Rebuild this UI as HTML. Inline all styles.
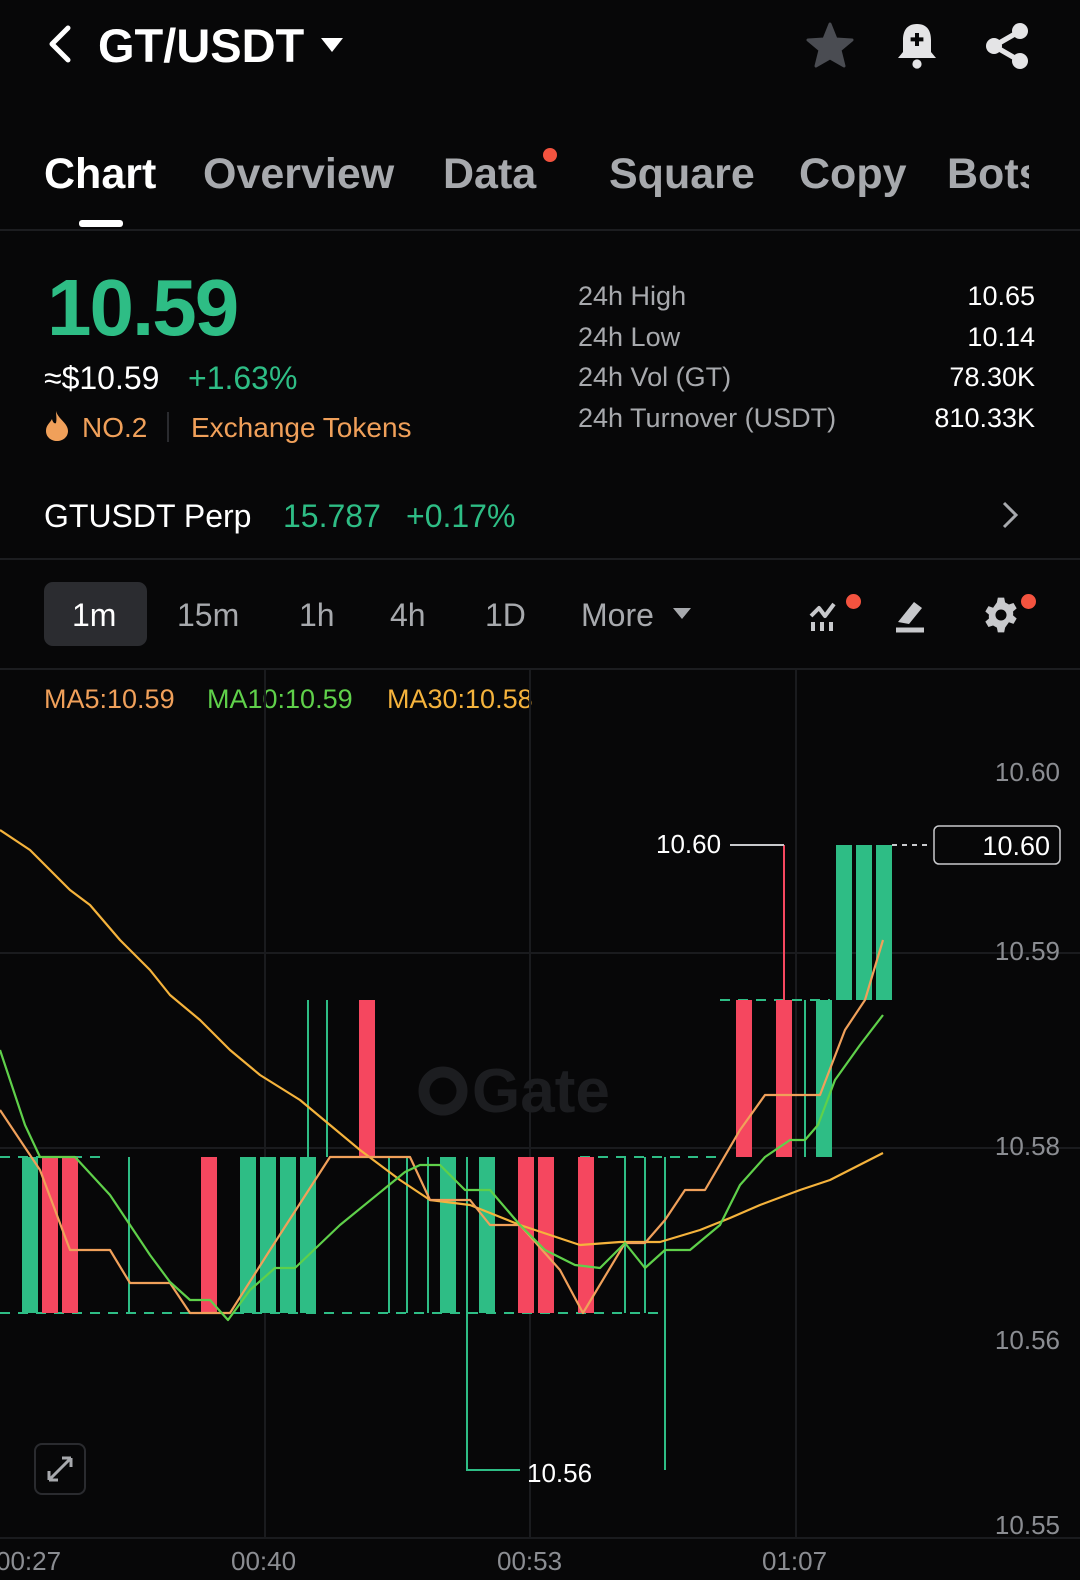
<!DOCTYPE html>
<html><head><meta charset="utf-8"><style>
*{margin:0;padding:0;box-sizing:border-box}
body{width:1080px;height:1580px;background:#070708;font-family:"Liberation Sans",sans-serif;color:#fff;position:relative;overflow:hidden}
.a{position:absolute;white-space:nowrap}
.g{color:#2ebd85}.gr{color:#8b8d92}
</style></head><body>
<svg class="a" style="left:44px;top:24px" width="30" height="40" viewBox="0 0 30 40"><path d="M24 4 L8 20 L24 36" stroke="#fff" stroke-width="5" fill="none" stroke-linecap="round" stroke-linejoin="round"/></svg>
<div class="a" style="left:98px;top:18px;font-size:47px;font-weight:bold">GT/USDT</div>
<svg class="a" style="left:320px;top:36px" width="24" height="18"><path d="M1 2 H23 L12 16Z" fill="#fff"/></svg>
<svg class="a" style="left:806px;top:22px" width="48" height="46" viewBox="0 0 24 23"><path d="M12 1 L15 8.5 L23 9 L17 14 L19 22 L12 18 L5 22 L7 14 L1 9 L9 8.5Z" fill="#4a4c52" stroke="#4a4c52" stroke-linejoin="round" stroke-width="1.5"/></svg>
<svg class="a" style="left:896px;top:22px" width="42" height="48" viewBox="0 0 21 24"><path d="M10.5 1 C5 1 3.5 5 3.5 9 V15 L1 18 H20 L17.5 15 V9 C17.5 5 16 1 10.5 1Z" fill="#e4e4e6"/><circle cx="10.5" cy="21" r="2.3" fill="#e4e4e6"/><path d="M10.5 5.5V12M7.3 8.7H13.7" stroke="#070708" stroke-width="2"/></svg>
<svg class="a" style="left:984px;top:22px" width="46" height="48" viewBox="0 0 23 24"><circle cx="18" cy="4.5" r="4" fill="#e4e4e6"/><circle cx="18" cy="19.5" r="4" fill="#e4e4e6"/><circle cx="5" cy="12" r="4" fill="#e4e4e6"/><path d="M18 4.5L5 12L18 19.5" stroke="#e4e4e6" stroke-width="2.6" fill="none"/></svg>

<div class="a" style="left:44px;top:150px;font-size:43px;font-weight:bold">Chart</div>
<div class="a" style="left:203px;top:150px;font-size:43px;font-weight:bold;color:#a7a9ad">Overview</div>
<div class="a" style="left:443px;top:150px;font-size:43px;font-weight:bold;color:#a7a9ad">Data</div>
<div class="a" style="left:543px;top:148px;width:14px;height:14px;border-radius:50%;background:#f3533f"></div>
<div class="a" style="left:609px;top:150px;font-size:43px;font-weight:bold;color:#a7a9ad">Square</div>
<div class="a" style="left:799px;top:150px;font-size:43px;font-weight:bold;color:#a7a9ad">Copy</div>
<div class="a" style="left:947px;top:150px;width:82px;overflow:hidden;font-size:43px;font-weight:bold;color:#a7a9ad">Bots</div>
<div class="a" style="left:79px;top:220px;width:44px;height:7px;border-radius:3px;background:#fff"></div>
<div class="a" style="left:0;top:229px;width:1080px;height:2px;background:#1c1d20"></div>

<div class="a g" style="left:47px;top:262px;font-size:80px;font-weight:bold;letter-spacing:-2px">10.59</div>
<div class="a" style="left:44px;top:360px;font-size:32px">≈$10.59</div>
<div class="a g" style="left:188px;top:360px;font-size:32px">+1.63%</div>
<svg class="a" style="left:44px;top:411px" width="26" height="30" viewBox="0 0 13 15"><path d="M6 0 C7 4 12 6 12 10 C12 13 9.5 15 6.5 15 C3.5 15 1 13 1 10 C1 7 3 6 4 4 C4.5 6 5.5 6.5 6 6 C6.5 4 6 2 6 0Z" fill="#f0a05a"/></svg>
<div class="a" style="left:82px;top:412px;font-size:28px;color:#f0a05a">NO.2</div>
<div class="a" style="left:167px;top:412px;width:2px;height:30px;background:#2a2b2f"></div>
<div class="a" style="left:191px;top:412px;font-size:28px;color:#f0a05a">Exchange Tokens</div>

<div class="a" style="left:578px;top:276px;font-size:27px;color:#a7a9ad;line-height:40.7px">24h High<br>24h Low<br>24h Vol (GT)<br>24h Turnover (USDT)</div>
<div class="a" style="right:45px;top:276px;font-size:27px;line-height:40.7px;text-align:right">10.65<br>10.14<br>78.30K<br>810.33K</div>

<div class="a" style="left:44px;top:498px;font-size:32px">GTUSDT Perp</div>
<div class="a g" style="left:283px;top:498px;font-size:32px">15.787</div>
<div class="a g" style="left:406px;top:498px;font-size:32px">+0.17%</div>
<svg class="a" style="left:1000px;top:500px" width="20" height="30"><path d="M4 3 L16 15 L4 27" stroke="#a7a9ad" stroke-width="3" fill="none"/></svg>
<div class="a" style="left:0;top:558px;width:1080px;height:2px;background:#1c1d20"></div>

<div class="a" style="left:44px;top:582px;width:103px;height:64px;border-radius:9px;background:#2b2c30"></div>
<div class="a" style="left:72px;top:597px;font-size:32px">1m</div>
<div class="a" style="left:177px;top:597px;font-size:32px;color:#a7a9ad">15m</div>
<div class="a" style="left:299px;top:597px;font-size:32px;color:#a7a9ad">1h</div>
<div class="a" style="left:390px;top:597px;font-size:32px;color:#a7a9ad">4h</div>
<div class="a" style="left:485px;top:597px;font-size:32px;color:#a7a9ad">1D</div>
<div class="a" style="left:581px;top:597px;font-size:32px;color:#a7a9ad">More</div>
<svg class="a" style="left:672px;top:607px" width="20" height="14"><path d="M1 1H19L10 12Z" fill="#a7a9ad"/></svg>
<svg class="a" style="left:808px;top:598px" width="40" height="34"><path d="M3 18 L11 10 L17 18 L26 6" stroke="#c8c9cc" stroke-width="4" fill="none" stroke-linejoin="round"/><path d="M5 24V33M14 24V33M23 24V33" stroke="#c8c9cc" stroke-width="4"/></svg>
<div class="a" style="left:846px;top:594px;width:15px;height:15px;border-radius:50%;background:#f3533f"></div>
<svg class="a" style="left:894px;top:598px" width="38" height="36"><path d="M4 24 L20 4 L28 10 L15 26" fill="#c8c9cc"/><path d="M2 32 H30" stroke="#c8c9cc" stroke-width="5"/></svg>
<svg class="a" style="left:982px;top:596px" width="38" height="38" viewBox="0 0 24 24"><path d="M10 1h4l.6 3 2.4 1.4 2.9-1 2 3.4-2.3 2a7 7 0 0 1 0 2.4l2.3 2-2 3.4-2.9-1L14.6 20 14 23h-4l-.6-3L7 18.6l-2.9 1-2-3.4 2.3-2a7 7 0 0 1 0-2.4l-2.3-2 2-3.4 2.9 1L9.4 4z" fill="#c8c9cc"/><circle cx="12" cy="12" r="3.5" fill="#070708"/></svg>
<div class="a" style="left:1021px;top:594px;width:15px;height:15px;border-radius:50%;background:#f3533f"></div>
<div class="a" style="left:0;top:668px;width:1080px;height:2px;background:#1c1d20"></div>

<div class="a" style="left:44px;top:684px;font-size:27px;color:#f0a05a">MA5:10.59</div>
<div class="a" style="left:207px;top:684px;font-size:27px;color:#5fd04a">MA10:10.59</div>
<div class="a" style="left:387px;top:684px;font-size:27px;color:#f5b33c">MA30:10.58</div>

<svg class="a" style="left:0;top:0" width="1080" height="1580">
<g stroke="#1a1b1e" stroke-width="2"><path d="M265 670V1538M530 670V1538M796 670V1538M0 953H1080M0 1148H1080M0 1538H1080"/></g>
<circle cx="443" cy="1091" r="19" fill="none" stroke="#1c1d20" stroke-width="11"/>
<text x="472" y="1112" font-size="62" font-weight="bold" fill="#1c1d20" font-family="Liberation Sans">Gate</text>
<g fill="#8b8d92" font-size="26" font-family="Liberation Sans" text-anchor="end"><text x="1060" y="781">10.60</text><text x="1060" y="960">10.59</text><text x="1060" y="1155">10.58</text><text x="1060" y="1349">10.56</text><text x="1060" y="1534">10.55</text></g>
<g fill="#8b8d92" font-size="26" font-family="Liberation Sans"><text x="-4" y="1570">00:27</text><text x="231" y="1570">00:40</text><text x="497" y="1570">00:53</text><text x="762" y="1570">01:07</text></g>
<g stroke="#2ebd85" stroke-width="2" stroke-dasharray="10 8" fill="none"><path d="M0 1313H660M0 1157H100M580 1157H720M720 1000H830"/></g>
<g stroke="#2ebd85" stroke-width="2" fill="none"><path d="M129 1157V1313M308 1000V1157M327 1000V1157M389 1157V1313M407 1157V1313M428 1157V1313M467 1157V1470H520M625 1157V1313M645 1157V1313M665 1157V1470M805 1000V1157"/></g>
<g fill="#2ebd85"><rect x="22" y="1157" width="16" height="156"/><rect x="240" y="1157" width="16" height="156"/><rect x="260" y="1157" width="16" height="156"/><rect x="280" y="1157" width="16" height="156"/><rect x="300" y="1157" width="16" height="156"/><rect x="440" y="1157" width="16" height="156"/><rect x="479" y="1157" width="16" height="156"/><rect x="816" y="1000" width="16" height="157"/><rect x="836" y="845" width="16" height="155"/><rect x="856" y="845" width="16" height="155"/><rect x="876" y="845" width="16" height="155"/></g>
<g fill="#f5475f"><rect x="42" y="1157" width="16" height="156"/><rect x="62" y="1157" width="16" height="156"/><rect x="201" y="1157" width="16" height="156"/><rect x="359" y="1000" width="16" height="157"/><rect x="518" y="1157" width="16" height="156"/><rect x="538" y="1157" width="16" height="156"/><rect x="578" y="1157" width="16" height="156"/><rect x="736" y="1000" width="16" height="157"/><rect x="776" y="1000" width="16" height="157"/></g>
<path d="M784 845V1000" stroke="#f5475f" stroke-width="2"/>
<path d="M730 845H784" stroke="#c8c9cc" stroke-width="2"/>
<text x="656" y="853" font-size="26" fill="#fff" font-family="Liberation Sans">10.60</text>
<text x="527" y="1482" font-size="26" fill="#fff" font-family="Liberation Sans">10.56</text>
<path d="M892 845H932" stroke="#c8c9cc" stroke-width="2" stroke-dasharray="5 5"/>
<rect x="934" y="826" width="126" height="38" rx="5" fill="#070708" stroke="#c8c9cc" stroke-width="1.5"/>
<text x="1050" y="855" font-size="27" fill="#fff" text-anchor="end" font-family="Liberation Sans">10.60</text>
<g fill="none" stroke-width="2.2" stroke-linejoin="round">
<path stroke="#f5b33c" d="M0 830 L30 850 L70 890 L90 905 L120 940 L150 970 L170 995 L200 1020 L230 1050 L260 1075 L300 1100 L330 1125 L360 1150 L400 1180 L430 1200 L470 1205 L520 1225 L580 1245 L620 1242 L660 1242 L700 1230 L730 1218 L760 1205 L800 1190 L830 1180 L883 1153"/>
<path stroke="#f0a05a" d="M0 1110 L40 1170 L70 1250 L110 1250 L130 1283 L170 1283 L190 1313 L230 1313 L270 1250 L330 1157 L410 1157 L430 1200 L470 1200 L490 1225 L520 1225 L560 1270 L583 1313 L625 1243 L645 1243 L665 1220 L685 1190 L705 1190 L740 1130 L765 1095 L820 1095 L845 1030 L865 1000 L883 940"/>
<path stroke="#5fd04a" d="M0 1050 L25 1125 L40 1157 L75 1157 L110 1195 L130 1225 L150 1255 L170 1282 L190 1300 L210 1300 L228 1320 L250 1290 L275 1268 L295 1268 L340 1225 L405 1172 L420 1165 L440 1165 L465 1190 L490 1190 L520 1225 L545 1250 L575 1265 L600 1268 L625 1243 L645 1268 L665 1250 L690 1250 L720 1225 L740 1185 L765 1157 L790 1140 L805 1140 L818 1125 L835 1080 L860 1045 L883 1015"/>
</g>
</svg>
<div class="a" style="left:34px;top:1443px;width:52px;height:52px;border:2px solid #2a2b2f;border-radius:8px"></div>
<svg class="a" style="left:46px;top:1455px" width="28" height="28"><path d="M3 25L25 3M3 25V16M3 25H12M25 3V12M25 3H16" stroke="#a7a9ad" stroke-width="3" fill="none"/></svg>
</body></html>
